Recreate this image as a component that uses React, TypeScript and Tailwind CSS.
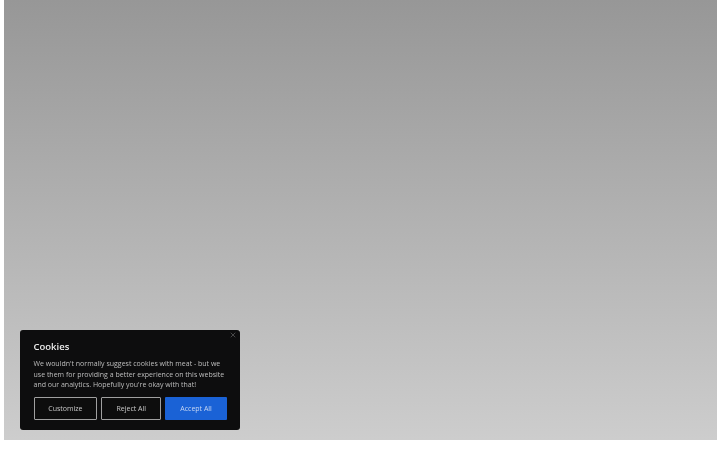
import { X } from "lucide-react";

function CookieButton({ label, primary, width }: { label: string; primary?: boolean; width: string }) {
  return (
    <button
      className={
        primary
          ? `${width} h-[22.5px] rounded-[1px] bg-[#1a62d6] pt-[1px] text-[7px] text-[#c6d6f2]`
          : `${width} h-[22.5px] rounded-[1px] border-[1.5px] border-[#a0a0a0] bg-[#0d0d0d] pt-[1px] text-[7px] text-[#c8c8c8]`
      }
    >
      {label}
    </button>
  );
}

export default function App() {
  return (
    <div className="h-[450px] w-[720px] overflow-hidden bg-white font-['Open_Sans',sans-serif]">
      <div className="relative ml-1 h-[440px] w-[712.5px] bg-gradient-to-b from-[#979797] to-[#cdcdcd]">
        {/* Cookie banner */}
        <div className="absolute bottom-[10px] left-4 h-[100px] w-[220px] rounded-[3px] bg-[#0d0d0e] pl-[13.5px] pr-[13px] pt-[11px] blur-[0.4px]">
          <button className="absolute right-[3px] top-[1px] text-[#858585]">
            <X size={8} strokeWidth={1.5} />
          </button>
          <h2 className="text-[9.5px] leading-[11px] font-semibold text-[#ececec]">Cookies</h2>
          <p className="mt-[7px] w-[200px] text-[7px] leading-[10.5px] whitespace-nowrap text-[#bebebe]">
            We wouldn't normally suggest cookies with meat - but we
            <br />
            use them for providing a better experience on this website
            <br />
            and our analytics. Hopefully you're okay with that!
          </p>
          <div className="mt-[6.5px] flex gap-1">
            <CookieButton label="Customize" width="w-[64px]" />
            <CookieButton label="Reject All" width="w-[60px]" />
            <CookieButton label="Accept All" width="w-[62px]" primary />
          </div>
        </div>
      </div>
    </div>
  );
}
